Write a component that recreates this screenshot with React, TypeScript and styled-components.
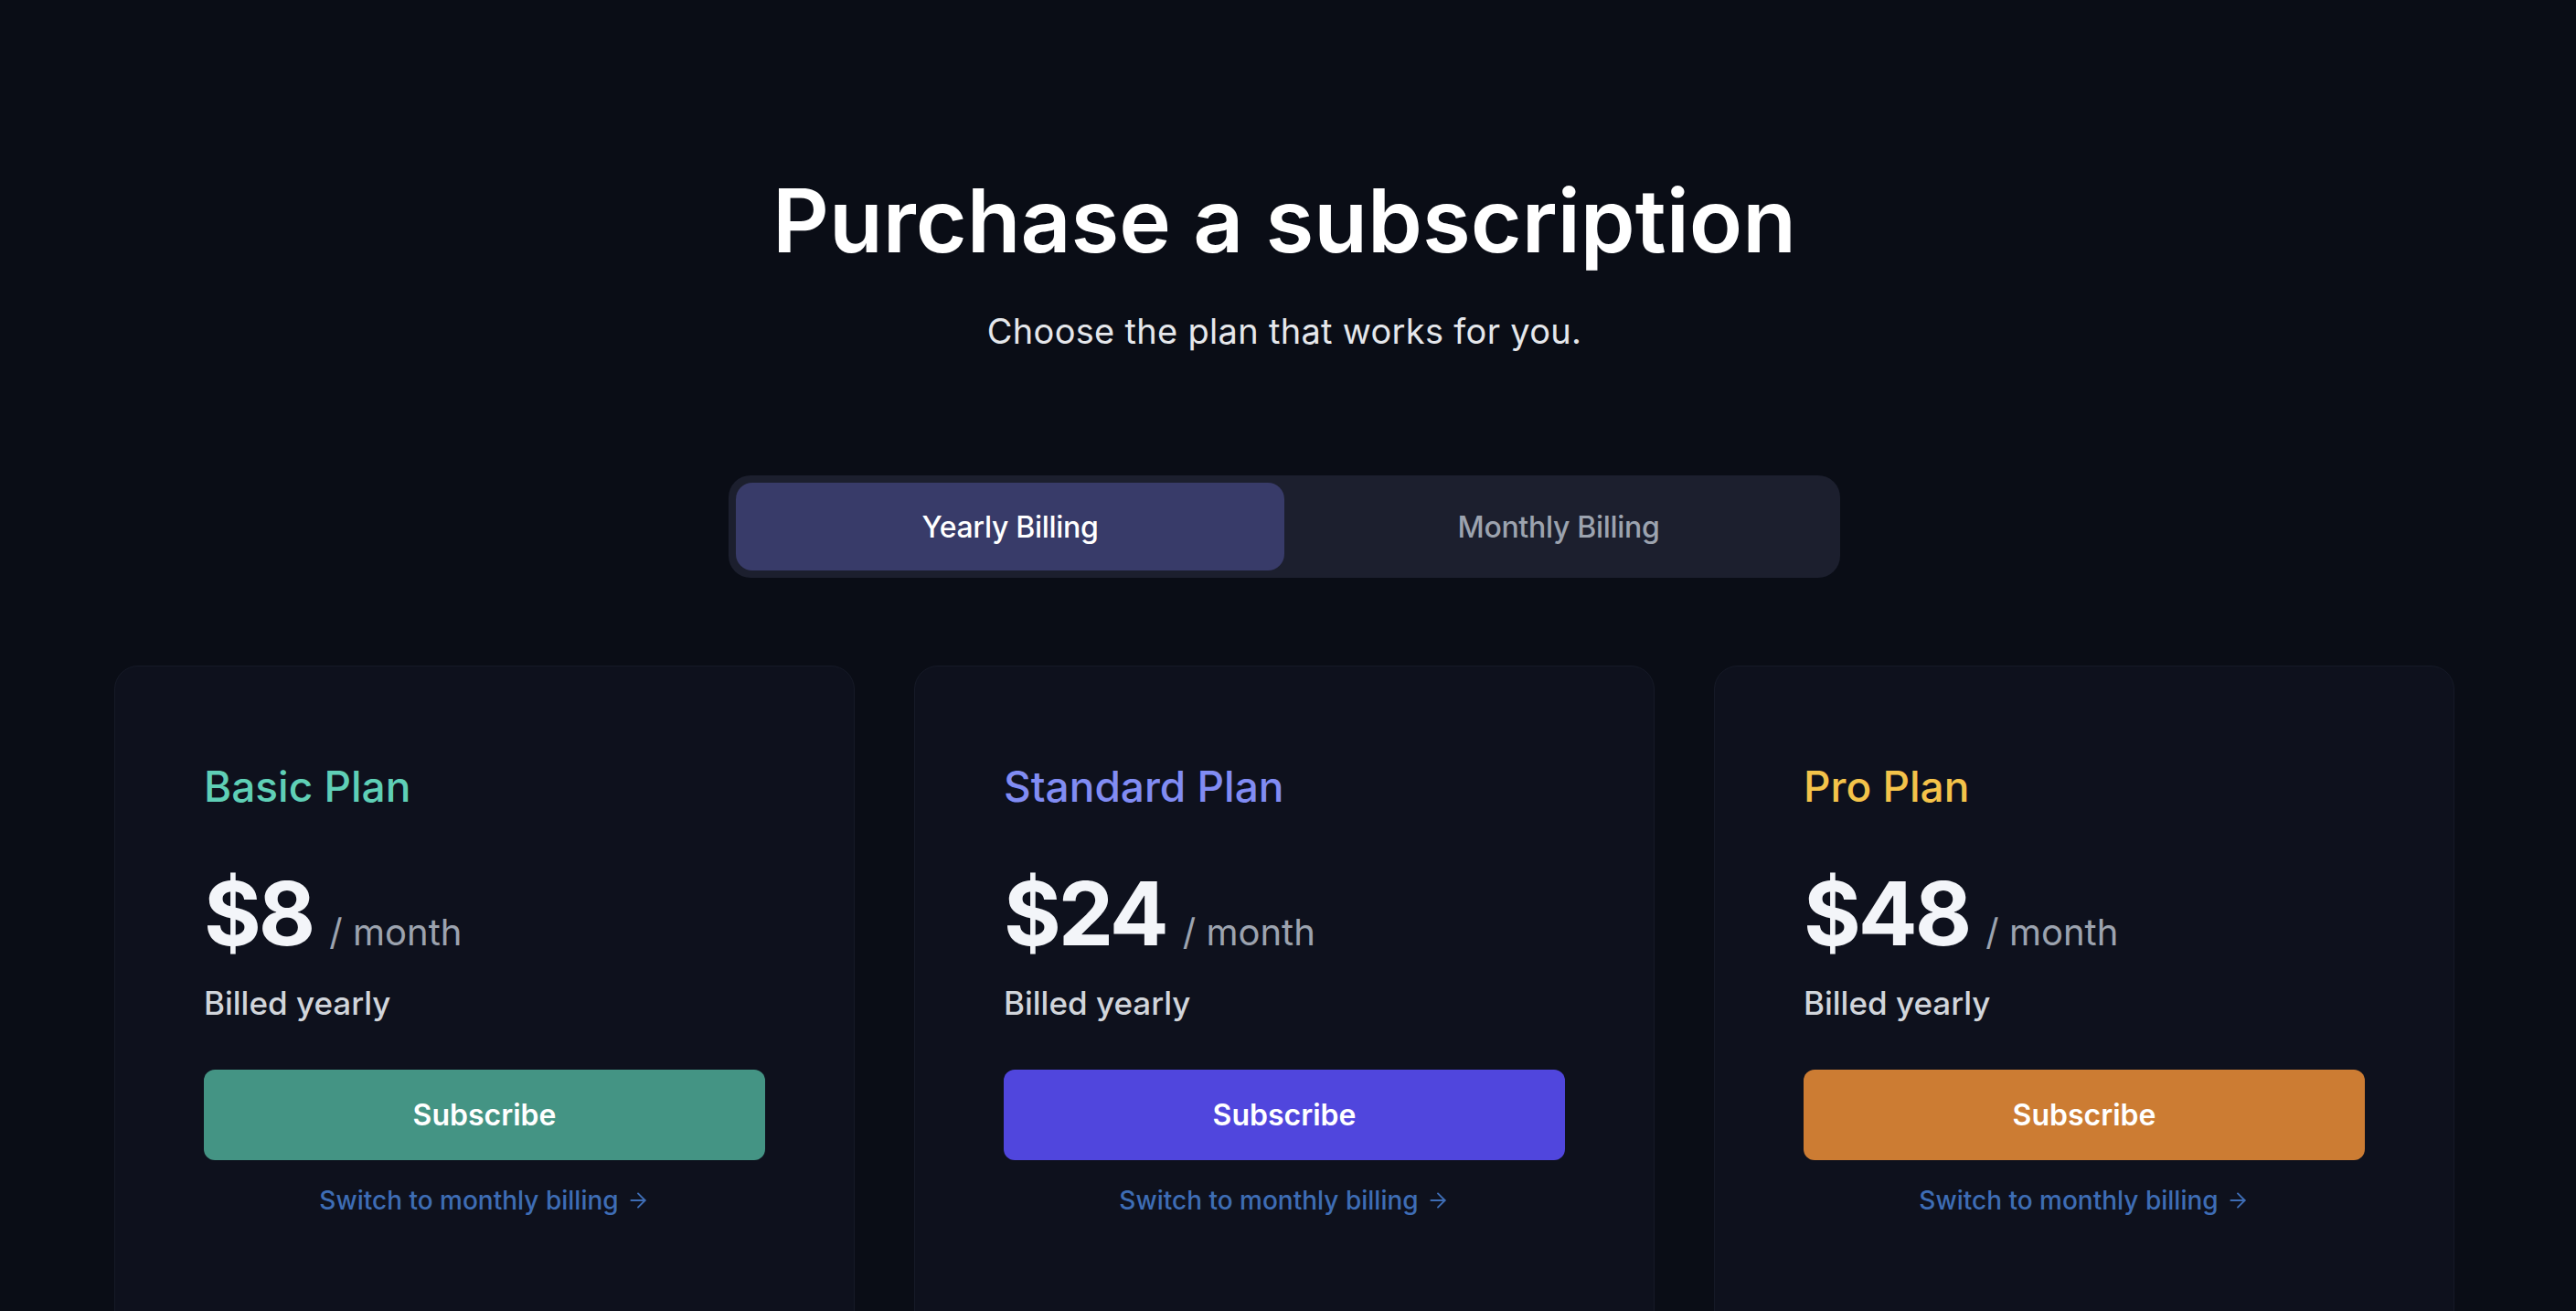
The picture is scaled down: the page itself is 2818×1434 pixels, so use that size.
import React from "react";
import styled, { createGlobalStyle } from "styled-components";
import { ArrowRight } from "lucide-react";

const colors = {
  page: "#0a0d16",
  card: "#0e111d",
  cardBorder: "#161a27",
  toggle: "#1c1f2e",
  toggleActive: "#383b69",
  white: "#ffffff",
  price: "#f3f5f9",
  sub: "#e5e7eb",
  billed: "#d1d5db",
  muted: "#9ca3af",
  link: "#3e6db5",
};

const GlobalStyle = createGlobalStyle`
  html, body {
    margin: 0;
    padding: 0;
    background: ${colors.page};
    overflow: hidden;
  }
  body {
    font-family: Inter, "Noto Sans", "Liberation Sans", sans-serif;
    color: ${colors.white};
  }
  * {
    box-sizing: border-box;
  }
`;

const Page = styled.main`
  min-height: 100vh;
  padding: 184px 8px 0 0;
  display: flex;
  flex-direction: column;
  align-items: center;
`;

const Title = styled.h1`
  margin: 0;
  font-size: 96px;
  line-height: 115px;
  font-weight: 600;
  letter-spacing: 0;
  color: ${colors.white};
`;

const Subtitle = styled.p`
  margin: 41px 0 0;
  font-size: 38px;
  line-height: 44px;
  font-weight: 400;
  letter-spacing: 0.3px;
  color: ${colors.sub};
`;

const Toggle = styled.div`
  margin-top: 136px;
  width: 1216px;
  height: 112px;
  padding: 8px;
  border-radius: 24px;
  background: ${colors.toggle};
  display: grid;
  grid-template-columns: 1fr 1fr;
`;

const ToggleOption = styled.button<{ $active?: boolean }>`
  border: none;
  border-radius: 18px;
  background: ${(p) => (p.$active ? colors.toggleActive : "transparent")};
  color: ${(p) => (p.$active ? colors.white : colors.muted)};
  font-family: inherit;
  font-size: 32px;
  font-weight: 500;
  letter-spacing: -0.3px;
  cursor: pointer;
`;

const Cards = styled.section`
  margin-top: 96px;
  width: 100%;
  max-width: 2560px;
  display: grid;
  grid-template-columns: repeat(3, 1fr);
  gap: 65px;
`;

const Card = styled.article`
  background: ${colors.card};
  border: 1px solid ${colors.cardBorder};
  border-radius: 26px;
  padding: 103px 97px 180px;
  display: flex;
  flex-direction: column;
`;

const PlanName = styled.h2<{ $color: string }>`
  margin: 0;
  font-size: 46px;
  line-height: 56px;
  font-weight: 500;
  color: ${(p) => p.$color};
`;

const PriceRow = styled.div`
  margin-top: 63px;
  display: flex;
  align-items: baseline;
  gap: 18px;
`;

const Amount = styled.span`
  font-size: 96px;
  line-height: 96px;
  font-weight: 700;
  letter-spacing: -3px;
  color: ${colors.price};
`;

const Period = styled.span`
  font-size: 40px;
  line-height: 40px;
  font-weight: 400;
  color: ${colors.muted};
`;

const Billed = styled.p`
  margin: 30px 0 0;
  font-size: 35px;
  line-height: 40px;
  font-weight: 500;
  color: ${colors.billed};
`;

const SubscribeButton = styled.button<{ $color: string }>`
  margin-top: 53px;
  height: 99px;
  width: 100%;
  border: none;
  border-radius: 12px;
  background: ${(p) => p.$color};
  color: ${colors.white};
  font-family: inherit;
  font-size: 32px;
  font-weight: 600;
  cursor: pointer;
`;

const SwitchLink = styled.a`
  margin-top: 28px;
  align-self: center;
  display: inline-flex;
  align-items: center;
  gap: 8px;
  font-size: 28px;
  line-height: 32px;
  font-weight: 500;
  color: ${colors.link};
  text-decoration: none;
  cursor: pointer;
`;

interface Plan {
  name: string;
  price: number;
  accent: string;
  button: string;
}

const plans: Plan[] = [
  { name: "Basic Plan", price: 8, accent: "#5fcfb6", button: "#449484" },
  { name: "Standard Plan", price: 24, accent: "#818cf3", button: "#5046dd" },
  { name: "Pro Plan", price: 48, accent: "#f4c34a", button: "#cc7c33" },
];

const PlanCard: React.FC<{ plan: Plan }> = ({ plan }) => (
  <Card>
    <PlanName $color={plan.accent}>{plan.name}</PlanName>
    <PriceRow>
      <Amount>${plan.price}</Amount>
      <Period>/ month</Period>
    </PriceRow>
    <Billed>Billed yearly</Billed>
    <SubscribeButton $color={plan.button}>Subscribe</SubscribeButton>
    <SwitchLink>
      Switch to monthly billing
      <ArrowRight size={26} strokeWidth={1.8} />
    </SwitchLink>
  </Card>
);

const App: React.FC = () => {
  return (
    <React.Fragment>
      <GlobalStyle />
      <Page>
        <Title>Purchase a subscription</Title>
        <Subtitle>Choose the plan that works for you.</Subtitle>
        <Toggle>
          <ToggleOption $active>Yearly Billing</ToggleOption>
          <ToggleOption>Monthly Billing</ToggleOption>
        </Toggle>
        <Cards>
          {plans.map((plan) => (
            <PlanCard key={plan.name} plan={plan} />
          ))}
        </Cards>
      </Page>
    </React.Fragment>
  );
};

export default App;
